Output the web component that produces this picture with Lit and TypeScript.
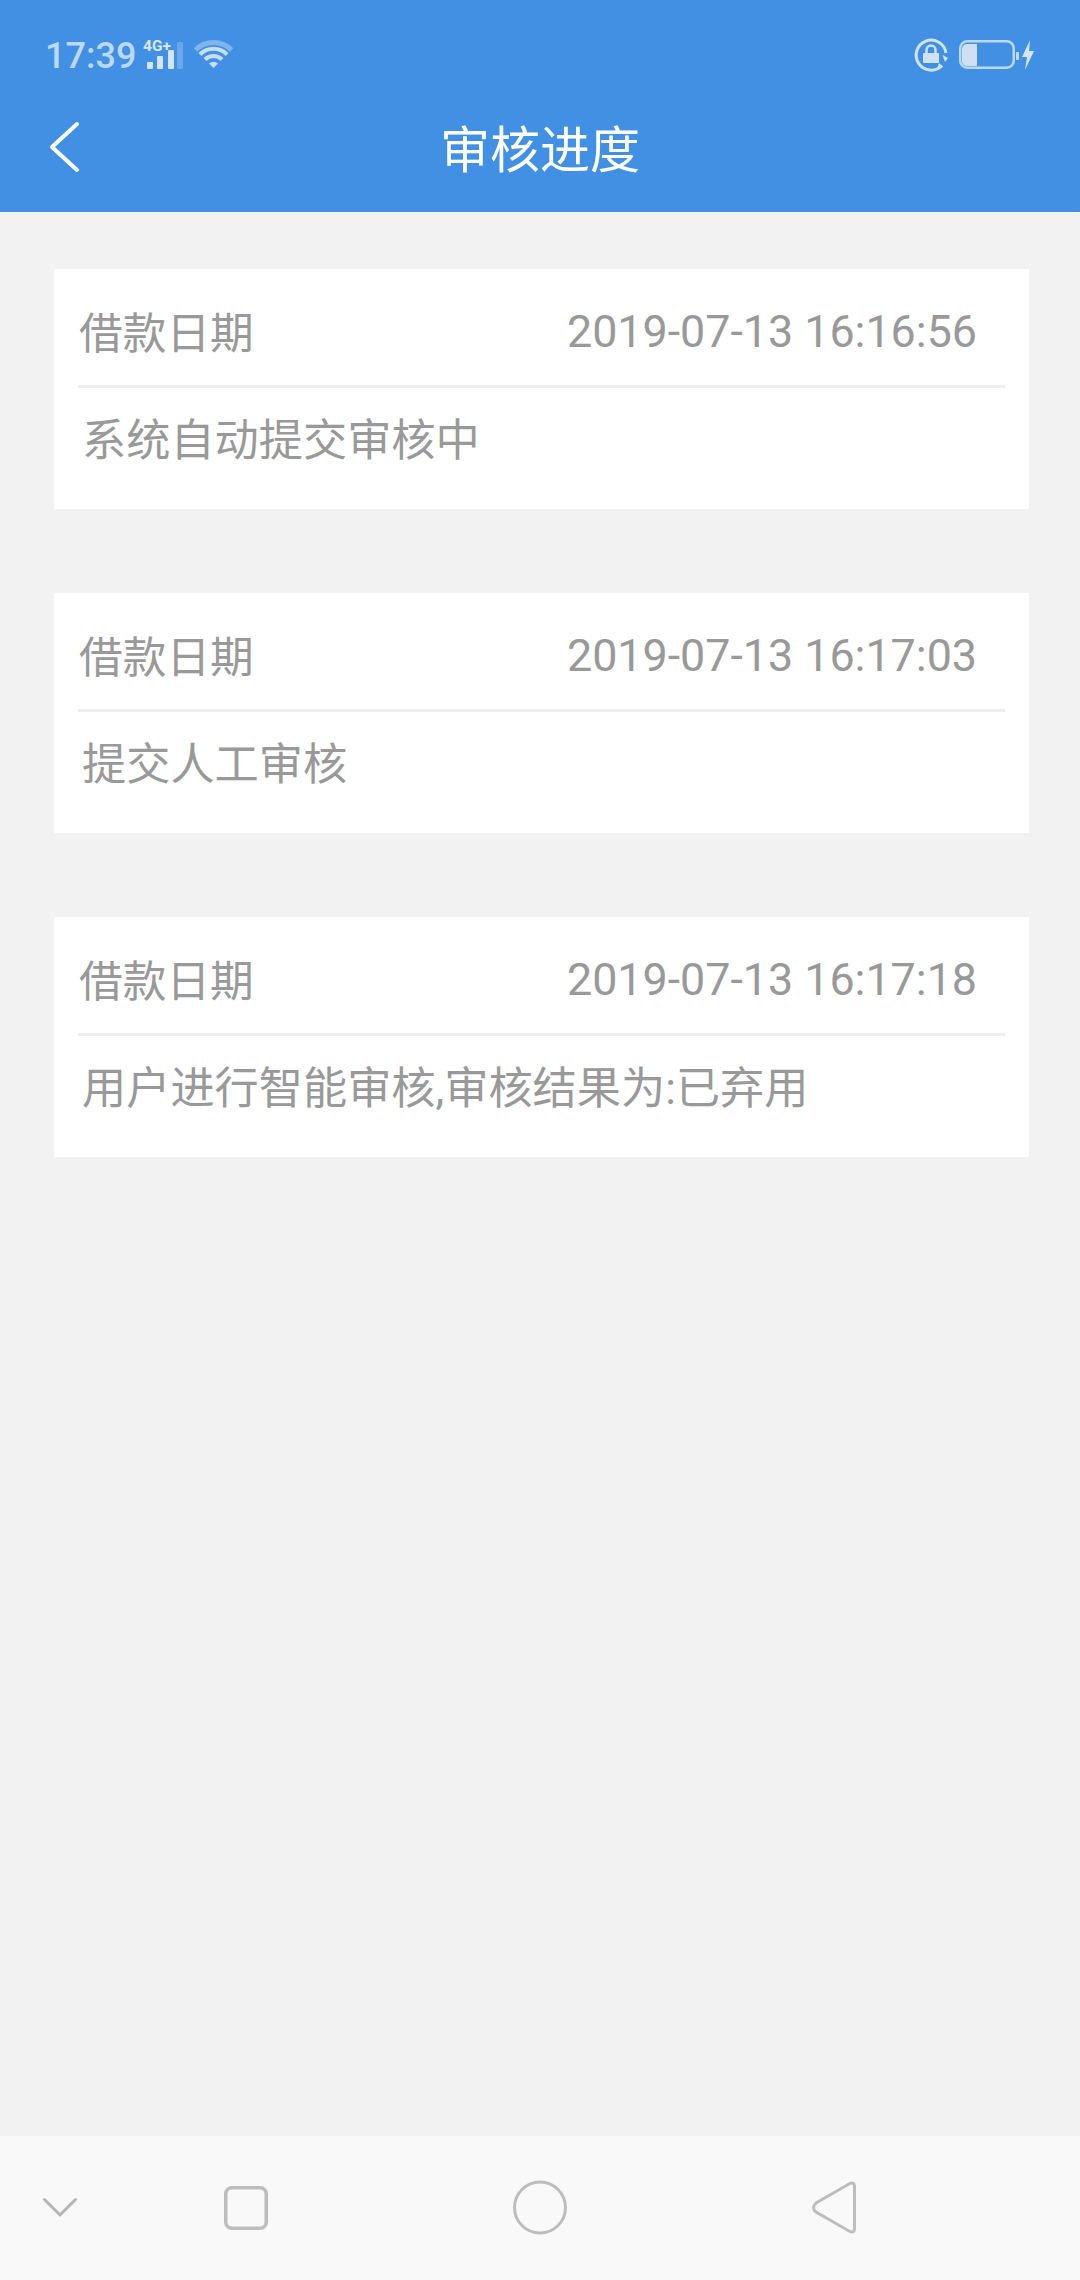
import { LitElement, html, css } from "lit";
import { customElement } from "lit/decorators.js";

const rows = [
  { time: "2019-07-13 16:16:56", msg: "系统自动提交审核中" },
  { time: "2019-07-13 16:17:03", msg: "提交人工审核" },
  { time: "2019-07-13 16:17:18", msg: "用户进行智能审核,审核结果为:已弃用" },
];

@customElement("app-root")
export class AppRoot extends LitElement {
  static styles = css`
    :host { display: flex; flex-direction: column; width: 1080px; height: 2280px; background: #f2f2f2;
      font-family: Roboto, "Noto Sans CJK SC", sans-serif; overflow: hidden; }
    .header { height: 212px; background: #4290e4; display: flex; flex-direction: column; flex: none; }
    .status { height: 88px; display: flex; align-items: center; justify-content: space-between; padding: 24px 43px 0 45px; box-sizing: border-box; }
    .status-left, .status-right { display: flex; align-items: center; }
    .status-left svg { margin-left: 5px; }
    .clock { font-size: 36px; font-weight: 500; color: #bcd8f6; line-height: 44px; }
    .title-bar { flex: 1; display: flex; align-items: center; position: relative; justify-content: center; }
    .title { font-size: 50px; color: #fff; line-height: 60px; margin-top: 1px; }
    .back { position: absolute; left: 46px; top: 28px; }
    .list { flex: 1; display: flex; flex-direction: column; gap: 84px; padding: 57px 51px 0 54px; }
    .card { height: 240px; background: #fff; padding: 0 24px; box-sizing: border-box; display: flex; flex-direction: column; }
    .top { height: 119px; box-sizing: border-box; display: flex; justify-content: space-between; align-items: center; border-bottom: 3px solid #eeeeee; color: #999; padding: 8px 28px 0 1px; flex: none; }
    .label { font-size: 43.7px; margin-top: -3px; }
    .time { font-size: 44.8px; }
    .msg { flex: 1; display: flex; align-items: center; font-size: 44.2px; color: #999; padding: 0 0 23px 4px; }
    .nav { height: 144px; flex: none; background: #f9f9f9; }
    .nav svg { display: block; }
  `;

  render() {
    return html`
      <div class="header">
        <div class="status">
          <div class="status-left">
            <span class="clock">17:39</span>
            <svg width="96" height="40" viewBox="0 0 96 40">
              <text x="2" y="15" font-size="15.5" font-weight="700" fill="#d9e8f9" font-family="Roboto">4G+</text>
              <rect x="6" y="26" width="6" height="7" rx="1" fill="#d3e4f8"/>
              <rect x="16" y="20" width="6" height="13" rx="1" fill="#d3e4f8"/>
              <rect x="27" y="14" width="6" height="19" rx="1" fill="#d3e4f8"/>
              <rect x="36" y="6" width="6" height="27" rx="1" fill="#6ba8ea"/>
              <path d="M54.5 14 A25.5 25.5 0 0 1 90.5 14" fill="none" stroke="#7fb4ed" stroke-width="5"/>
              <path d="M59 18.5 A19 19 0 0 1 86 18.5" fill="none" stroke="#c6def8" stroke-width="4"/>
              <path d="M64 23.5 A12 12 0 0 1 81 23.5" fill="none" stroke="#c6def8" stroke-width="4"/>
              <path d="M68 27.5 A6.4 6.4 0 0 1 77 27.5 L72.5 32 Z" fill="#c6def8"/>
            </svg>
          </div>
          <div class="status-right">
            <svg width="126" height="40" viewBox="0 0 126 40">
              <path d="M31 29.5 A15 15 0 1 1 35 17" fill="none" stroke="#cfe2f8" stroke-width="3"/>
              <path d="M31.5 19 L37 22 L34 26 Z M28 27 L32 31 L26 33 Z" fill="#cfe2f8"/>
              <rect x="12" y="17" width="16" height="10" rx="1" fill="#cfe2f8"/>
              <path d="M15.5 17 V14 A4.5 4.5 0 0 1 24.5 14 V17" fill="none" stroke="#cfe2f8" stroke-width="2.5"/>
              <rect x="49.25" y="5.25" width="53.5" height="26.5" rx="7" fill="none" stroke="#bcd8f6" stroke-width="2.5"/>
              <path d="M56 8 H66 V30 H56 A5 5 0 0 1 51 25 V13 A5 5 0 0 1 56 8 Z" fill="#cfe0f5"/>
              <rect x="105" y="16" width="3" height="8" fill="#bcd8f6"/>
              <path d="M119 4 L111 21 H116 L114 34 L123 15 H118 Z" fill="#d6e6f9"/>
            </svg>
          </div>
        </div>
        <div class="title-bar">
          <svg class="back" width="36" height="60" viewBox="0 0 36 60">
            <path d="M31 8 L6 31 L31 54" fill="none" stroke="#fff" stroke-width="4" stroke-linecap="round" stroke-linejoin="round"/>
          </svg>
          <span class="title">审核进度</span>
        </div>
      </div>
      <div class="list">
        ${rows.map(r => html`
          <div class="card">
            <div class="top"><span class="label">借款日期</span><span class="time">${r.time}</span></div>
            <div class="msg">${r.msg}</div>
          </div>`)}
      </div>
      <div class="nav">
        <svg width="1080" height="144" viewBox="0 0 1080 144">
          <path d="M44.5 63.5 L60 79 L75.5 63.5" fill="none" stroke="#b5b5b5" stroke-width="3" stroke-linecap="round"/>
          <rect x="225.75" y="51.75" width="40.5" height="40.5" rx="6" fill="none" stroke="#bdbdbd" stroke-width="3.5"/>
          <circle cx="540" cy="71.5" r="25.5" fill="none" stroke="#bdbdbd" stroke-width="3"/>
          <path d="M849 48 Q854.5 45 854.5 51 V92 Q854.5 98 849 95 L816 76 Q811 72 816 67 Z" fill="none" stroke="#bdbdbd" stroke-width="3"/>
        </svg>
      </div>
    `;
  }
}
